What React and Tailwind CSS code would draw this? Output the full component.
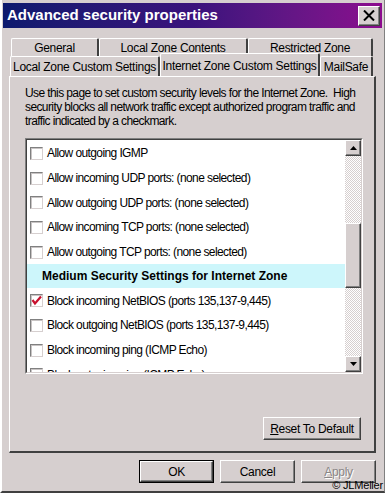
import React from "react";

const raised =
  "border border-t-white border-l-white border-r-[#404040] border-b-[#404040] shadow-[inset_-1px_-1px_0_#808080]";

function Checkbox({ checked }) {
  return (
    <div className="w-[13px] h-[13px] bg-white border border-t-[#808080] border-l-[#808080] border-r-[#d6cfcf] border-b-[#d6cfcf] shadow-[inset_1px_1px_0_#c8c4c4] flex items-center justify-center shrink-0">
      {checked && (
        <svg width="11" height="11" viewBox="0 0 11 11">
          <path d="M1.5 5 L4 8.5 L10 1.5" stroke="#c8102e" strokeWidth="2.2" fill="none" />
        </svg>
      )}
    </div>
  );
}

function Row({ label, checked }) {
  return (
    <div className="h-[24.7px] flex items-center pl-[3px] gap-[4px] shrink-0 whitespace-nowrap">
      <Checkbox checked={checked} />
      <span>{label}</span>
    </div>
  );
}

function Tab({ label, w, className = "" }) {
  return (
    <div
      className={`h-[18px] flex items-center justify-center whitespace-nowrap bg-[#d6cfcf] border-t border-l border-t-white border-l-white border-r-2 border-r-[#404040] rounded-t-[2px] ${className}`}
      style={{ width: w }}
    >
      {label}
    </div>
  );
}

export default function App() {
  return (
    <div
      className="w-[385px] h-[493px] bg-[#d6cfcf] relative overflow-hidden border-l-2 border-l-white border-b-2 border-b-[#404040] border-r border-r-[#808080] text-[11px] tracking-[-0.2px] text-black"
      style={{ fontFamily: '"Liberation Sans", Arial, sans-serif' }}
    >
      {/* Title bar */}
      <div className="mt-[3px] ml-[1px] mr-[2px] h-[25px] bg-gradient-to-r from-[#0c1a6e] via-[#3a127c] to-[#8c0a8e] flex items-center pl-[4px] pr-[2px]">
        <span className="text-white text-[15px] font-bold tracking-[0px]">
          Advanced security properties
        </span>
        <div className={`ml-auto w-[22px] h-[20px] bg-[#d6cfcf] ${raised} flex items-center justify-center`}>
          <svg width="12" height="11" viewBox="0 0 12 11">
            <path d="M1 0.5 L11 10.5 M11 0.5 L1 10.5" stroke="black" strokeWidth="2" />
          </svg>
        </div>
      </div>

      {/* Tabs */}
      <div className="mt-[10px] pl-[9px] relative z-10 text-[12px] tracking-[-0.3px]">
        <div className="flex">
          <Tab label="General" w={88} />
          <Tab label="Local Zone Contents" w={149} />
          <Tab label="Restricted Zone" w={125} />
        </div>
        <div className="flex items-end h-[20px] -ml-[1px]">
          <Tab label="Local Zone Custom Settings" w={150} className="h-[20px]" />
          <div className="w-[160px] h-[23px] -mt-[3px] -mb-[1px] flex items-start pt-[3px] justify-center whitespace-nowrap bg-[#d6cfcf] border-t border-l border-t-white border-l-white border-r-2 border-r-[#404040] rounded-t-[2px] relative z-20 self-start">
            Internet Zone Custom Settings
          </div>
          <Tab label="MailSafe" w={53} className="h-[20px]" />
        </div>
      </div>

      {/* Panel */}
      <div className="ml-[7px] w-[367px] h-[377px] border-t border-l border-t-white border-l-white border-r-2 border-r-[#404040] border-b-2 border-b-[#404040] flex flex-col px-[15px]">
        <p className="mt-[9px] leading-[14px] text-[12px] tracking-[-0.6px] whitespace-nowrap">
          Use this page to set custom security levels for the Internet Zone.&nbsp; High
          <br />
          security blocks all network traffic except authorized program traffic and
          <br />
          traffic indicated by a checkmark.
        </p>
        {/* List box */}
        <div className="mt-[10px] w-[338px] h-[236px] border border-t-[#808080] border-l-[#808080] border-r-white border-b-white">
          <div className="w-full h-full border border-t-[#404040] border-l-[#404040] border-r-[#d6cfcf] border-b-[#d6cfcf] bg-white flex overflow-hidden">
            <div className="flex-1 flex flex-col overflow-hidden pt-[1px] text-[12px] tracking-[-0.6px]">
              <Row label="Allow outgoing IGMP" />
              <Row label="Allow incoming UDP ports: (none selected)" />
              <Row label="Allow outgoing UDP ports: (none selected)" />
              <Row label="Allow incoming TCP ports: (none selected)" />
              <Row label="Allow outgoing TCP ports: (none selected)" />
              <div className="h-[24px] shrink-0 bg-[#cdf6fb] flex items-center pl-[15px] font-bold text-[12px] tracking-[0px] whitespace-nowrap">
                Medium Security Settings for Internet Zone
              </div>
              <Row label="Block incoming NetBIOS (ports 135,137-9,445)" checked />
              <Row label="Block outgoing NetBIOS (ports 135,137-9,445)" />
              <Row label="Block incoming ping (ICMP Echo)" />
              <Row label="Block outgoing ping (ICMP Echo)" />
            </div>
            {/* Scrollbar */}
            <div className="w-[16px] h-full flex flex-col bg-[repeating-conic-gradient(#d6cfcf_0_25%,#ffffff_0_50%)] bg-[length:2px_2px]">
              <div className={`h-[16px] bg-[#d6cfcf] ${raised} flex items-center justify-center`}>
                <svg width="7" height="4" viewBox="0 0 7 4"><path d="M3.5 0 L7 4 L0 4 Z" fill="black" /></svg>
              </div>
              <div className="h-[67px]" />
              <div className={`h-[65px] bg-[#d6cfcf] ${raised}`} />
              <div className="flex-1" />
              <div className={`h-[16px] bg-[#d6cfcf] ${raised} flex items-center justify-center`}>
                <svg width="7" height="4" viewBox="0 0 7 4"><path d="M0 0 L7 0 L3.5 4 Z" fill="black" /></svg>
              </div>
            </div>
          </div>
        </div>
        <div className="flex justify-end mt-[43px] -mr-[2px] text-[12px] tracking-[-0.3px]">
          <button className={`w-[98px] h-[23px] bg-[#d6cfcf] ${raised} flex items-center justify-center`}>
            <span><span className="underline">R</span>eset To Default</span>
          </button>
        </div>
      </div>

      {/* Bottom buttons */}
      <div className="flex gap-[6px] mt-[7px] ml-[137px] text-[12px] tracking-[-0.3px]">
        <button className="w-[75px] h-[23px] bg-[#d6cfcf] border border-black flex">
          <div className={`flex-1 ${raised} flex items-center justify-center`}>OK</div>
        </button>
        <button className={`w-[75px] h-[23px] bg-[#d6cfcf] ${raised} flex items-center justify-center`}>Cancel</button>
        <button className={`w-[75px] h-[23px] bg-[#d6cfcf] ${raised} flex items-center justify-center text-[#8a8686] [text-shadow:1px_1px_0_#ffffff]`}>
          <span><span className="underline">A</span>pply</span>
        </button>
      </div>
      <div className="absolute right-[1px] bottom-[0px] text-[11px] leading-[12px] tracking-[-0.2px] text-black">© JLMeller</div>
    </div>
  );
}
